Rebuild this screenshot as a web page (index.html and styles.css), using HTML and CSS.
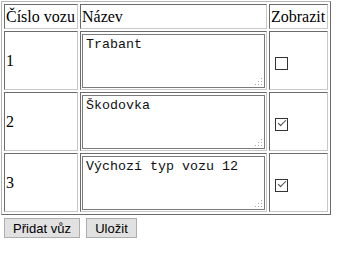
FILE: index.html
```html
<!DOCTYPE html>
<html lang="cs">
<head>
<meta charset="utf-8">
<title>Vozy</title>
<link rel="stylesheet" href="styles.css">
</head>
<body>
<table class="cars">
  <tr class="head">
    <td class="c-num">Číslo vozu</td>
    <td class="c-name">Název</td>
    <td class="c-show">Zobrazit</td>
  </tr>
  <tr class="row">
    <td class="c-num">1</td>
    <td class="c-name"><div class="field"><textarea>Trabant</textarea><span class="grip"><svg width="7" height="7" viewBox="0 0 7 7"><rect x="6" y="0" width="1" height="1"/><rect x="3" y="3" width="1" height="1"/><rect x="6" y="3" width="1" height="1"/><rect x="0" y="6" width="1" height="1"/><rect x="3" y="6" width="1" height="1"/><rect x="6" y="6" width="1" height="1"/></svg></span></div></td>
    <td class="c-show"><input type="checkbox" class="check"></td>
  </tr>
  <tr class="row">
    <td class="c-num">2</td>
    <td class="c-name"><div class="field"><textarea>Škodovka</textarea><span class="grip"><svg width="7" height="7" viewBox="0 0 7 7"><rect x="6" y="0" width="1" height="1"/><rect x="3" y="3" width="1" height="1"/><rect x="6" y="3" width="1" height="1"/><rect x="0" y="6" width="1" height="1"/><rect x="3" y="6" width="1" height="1"/><rect x="6" y="6" width="1" height="1"/></svg></span></div></td>
    <td class="c-show"><input type="checkbox" class="check" checked></td>
  </tr>
  <tr class="row">
    <td class="c-num">3</td>
    <td class="c-name"><div class="field"><textarea>Výchozí typ vozu 12</textarea><span class="grip"><svg width="7" height="7" viewBox="0 0 7 7"><rect x="6" y="0" width="1" height="1"/><rect x="3" y="3" width="1" height="1"/><rect x="6" y="3" width="1" height="1"/><rect x="0" y="6" width="1" height="1"/><rect x="3" y="6" width="1" height="1"/><rect x="6" y="6" width="1" height="1"/></svg></span></div></td>
    <td class="c-show"><input type="checkbox" class="check" checked></td>
  </tr>
</table>
<div class="actions">
  <button type="button" class="btn btn-add">Přidat vůz</button>
  <button type="button" class="btn btn-save">Uložit</button>
</div>
</body>
</html>
```
FILE: styles.css
```css
html, body {
  background: #fff;
}
body {
  margin: 1px;
  font-family: "Liberation Serif", "Times New Roman", serif;
  font-size: 16px;
  color: #000;
}
.cars {
  border-collapse: separate;
  border-spacing: 2px;
  border: 1px solid;
  border-color: #b4b4b4 #6b6b6b #6b6b6b #b4b4b4;
}
.cars td {
  border: 1px solid;
  border-color: #6b6b6b #c8c8c8 #c8c8c8 #6b6b6b;
  padding: 1px;
  vertical-align: middle;
  line-height: 19px;
  white-space: nowrap;
}
.head td {
  height: 21px;
}
.row td {
  height: 55px;
}
.c-num { width: 70px; }
.c-name { width: 183px; }
.c-show { width: 55px; }
.row .c-name {
  vertical-align: top;
}
.field {
  position: relative;
  margin-top: 1px;
  width: 183px;
  height: 54px;
}
.field textarea {
  display: block;
  box-sizing: border-box;
  width: 183px;
  height: 54px;
  margin: 0;
  border: 1px solid #7a7a7a;
  padding: 2px 3px;
  font-family: "Liberation Mono", "Courier New", monospace;
  font-size: 13.333px;
  line-height: 15px;
  color: #111;
  background: #fff;
  resize: none;
  overflow: hidden;
}
.grip {
  position: absolute;
  right: 3px;
  bottom: 3px;
  width: 7px;
  height: 7px;
  line-height: 0;
  fill: #a8a8a8;
}
.check {
  -webkit-appearance: none;
  appearance: none;
  position: relative;
  box-sizing: border-box;
  width: 13px;
  height: 13px;
  margin: 3px 3px 0 4px;
  border: 1px solid #333;
  background: #fff;
  vertical-align: middle;
}
.check:checked::after {
  content: "";
  position: absolute;
  left: 2px;
  top: 1px;
  width: 7px;
  height: 3px;
  border-left: 1px solid #444;
  border-bottom: 1px solid #444;
  transform: rotate(-45deg);
}
.actions {
  display: flex;
  gap: 6px;
  margin-top: 3px;
  padding-left: 3px;
}
.btn {
  box-sizing: border-box;
  height: 20px;
  padding: 0;
  border: 1px solid #adadad;
  border-radius: 0;
  background: #e1e1e1;
  font-family: "Liberation Sans", Arial, sans-serif;
  font-size: 13px;
  color: #000;
}
.btn-add { width: 76px; }
.btn-save { width: 51px; }
```
